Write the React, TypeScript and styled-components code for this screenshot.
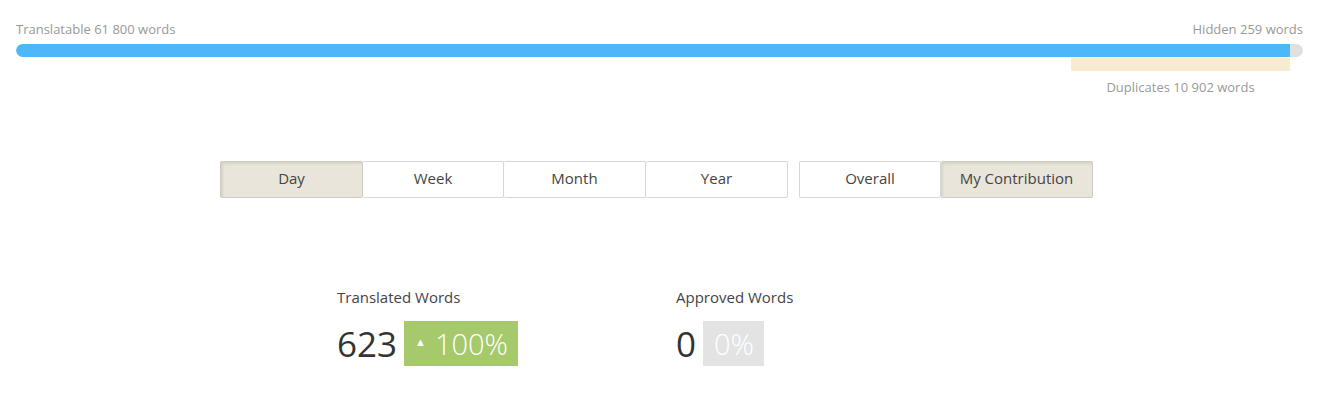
import React from "react";
import styled, { createGlobalStyle } from "styled-components";

const Global = createGlobalStyle`
  html, body { margin: 0; padding: 0; background: #fff; }
  body { font-family: "Open Sans", "Noto Sans", sans-serif; color: #444; }
`;

const Page = styled.div`
  width: 1329px;
  height: 411px;
  box-sizing: border-box;
  padding: 20px 26px 0 16px;
`;

const LabelRow = styled.div`
  display: flex;
  justify-content: space-between;
  font-size: 13px;
  line-height: 18px;
  color: #999;
`;

const Track = styled.div`
  margin-top: 6px;
  height: 13px;
  border-radius: 7px;
  background: #e0e0e0;
  display: flex;
  overflow: hidden;
`;

const Fill = styled.div`
  background: #4cb7f9;
  border-radius: 7px 0 0 7px;
  height: 100%;
`;

const DupRow = styled.div`
  display: flex;
  justify-content: flex-end;
  padding-right: 13px;
  margin-top: 1px;
`;

const DupBlock = styled.div`
  width: 219px;
  display: flex;
  flex-direction: column;
  align-items: center;
`;

const DupBar = styled.div`
  width: 100%;
  height: 13px;
  background: #f8ebd0;
`;

const DupLabel = styled.div`
  font-size: 13px;
  line-height: 18px;
  color: #999;
  margin-top: 7px;
`;

const Controls = styled.div`
  display: flex;
  gap: 11px;
  margin-top: 65px;
  padding-left: 204px;
`;

const Group = styled.div`
  display: flex;
`;

const Btn = styled.div<{ $active?: boolean; $w: number; $first?: boolean }>`
  width: ${(p) => p.$w}px;
  height: 37px;
  box-sizing: border-box;
  display: flex;
  align-items: center;
  justify-content: center;
  padding-bottom: 3px;
  font-size: 15px;
  color: #444;
  border: 1px solid ${(p) => (p.$active ? "#cfcbc0" : "#d6d6d6")};
  ${(p) => (p.$first ? "" : "border-left: none;")}
  background: ${(p) => (p.$active ? "#e9e5da" : "#fff")};
  box-shadow: ${(p) =>
    p.$active ? "inset 2px 2px 2px rgba(0,0,0,0.08)" : "none"};
  border-radius: 2px;
`;

const Stats = styled.div`
  display: flex;
  margin-top: 89px;
  padding-left: 321px;
`;

const Stat = styled.div`
  width: 339px;
`;

const StatTitle = styled.div`
  font-size: 15px;
  line-height: 20px;
  color: #444;
`;

const StatValue = styled.div`
  display: flex;
  align-items: center;
  gap: 7px;
  margin-top: 14px;
`;

const Num = styled.div`
  font-size: 35px;
  line-height: 45px;
  color: #333;
  font-weight: 400;
`;

const Badge = styled.div<{ $bg: string }>`
  height: 45px;
  box-sizing: border-box;
  padding: 0 10px 0 11px;
  display: flex;
  align-items: center;
  gap: 9px;
  background: ${(p) => p.$bg};
  color: #fff;
  font-size: 29px;
  font-weight: 300;
`;

const Tri = styled.span`
  font-size: 11px;
  line-height: 1;
  margin-top: -4px;
`;

export default function App() {
  return (
    <Page>
      <Global />
      <LabelRow>
        <span>Translatable 61 800 words</span>
        <span>Hidden 259 words</span>
      </LabelRow>
      <Track>
        <Fill style={{ width: `${((1290 - 16) / (1303 - 16)) * 100}%` }} />
      </Track>
      <DupRow>
        <DupBlock>
          <DupBar />
          <DupLabel>Duplicates 10 902 words</DupLabel>
        </DupBlock>
      </DupRow>
      <Controls>
        <Group>
          <Btn $w={143} $first $active>Day</Btn>
          <Btn $w={141}>Week</Btn>
          <Btn $w={142}>Month</Btn>
          <Btn $w={142}>Year</Btn>
        </Group>
        <Group>
          <Btn $w={142} $first>Overall</Btn>
          <Btn $w={152} $active>My Contribution</Btn>
        </Group>
      </Controls>
      <Stats>
        <Stat>
          <StatTitle>Translated Words</StatTitle>
          <StatValue>
            <Num>623</Num>
            <Badge $bg="#a5c96b">
              <Tri>▲</Tri>
              <span>100%</span>
            </Badge>
          </StatValue>
        </Stat>
        <Stat>
          <StatTitle>Approved Words</StatTitle>
          <StatValue>
            <Num>0</Num>
            <Badge $bg="#e3e3e3">
              <span>0%</span>
            </Badge>
          </StatValue>
        </Stat>
      </Stats>
    </Page>
  );
}
